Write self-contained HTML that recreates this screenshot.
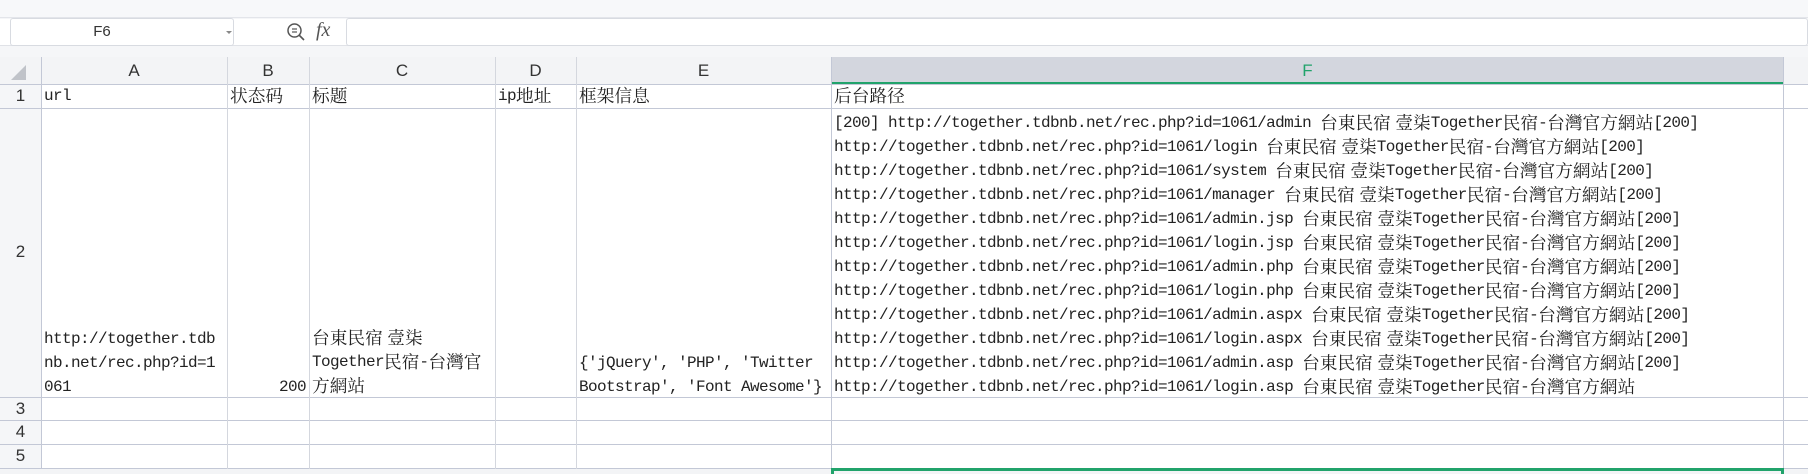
<!DOCTYPE html>
<html><head><meta charset="utf-8"><style>
*{margin:0;padding:0;box-sizing:border-box}
body{width:1808px;height:474px;overflow:hidden;background:#f5f6f8;position:relative;font-family:"Liberation Mono","Noto Serif CJK SC",monospace;color:#222}
.a{position:absolute}
.c{font-family:"Noto Serif CJK SC","Noto Sans CJK SC",serif;font-size:17.7px;display:inline-block;height:24px;line-height:24px;vertical-align:top;letter-spacing:0}
.t{position:absolute;font-size:16px;letter-spacing:-0.6px;white-space:nowrap}
.t div{height:24px;line-height:24px}
.h{position:absolute;top:57px;height:27px;line-height:27px;text-align:center;font-family:"Liberation Sans",sans-serif;font-size:17px;color:#333}
.r{position:absolute;left:0;width:41px;text-align:center;font-family:"Liberation Sans",sans-serif;font-size:17px;color:#333}
.vl{position:absolute;top:57px;width:1px;height:417px;background:#d4d7de}
.hl{position:absolute;left:0;width:1808px;height:1px;background:#c3c8d6}
</style></head><body>
<div class="a" style="left:0;top:0;width:1808px;height:18px;background:#f7f8fa;border-bottom:1px solid #e3e5ea"></div>
<div class="a" style="left:0;top:19px;width:1808px;height:27px;background:#fff;border-bottom:1px solid #e0e2e7"></div>
<div class="a" style="left:10px;top:18px;width:224px;height:28px;background:#fff;border:1px solid #d8dbe1;border-radius:3px;font-family:'Liberation Sans',sans-serif;font-size:15px;line-height:26px;text-align:center;color:#333;padding-right:40px">F6</div>
<div class="a" style="left:226px;top:31px;width:0;height:0;border-left:3px solid transparent;border-right:3px solid transparent;border-top:3px solid #888"></div>
<svg class="a" style="left:286px;top:22px" width="20" height="20" viewBox="0 0 20 20"><circle cx="8.5" cy="8.5" r="6.5" fill="none" stroke="#555" stroke-width="1.5"/><line x1="13" y1="13" x2="18" y2="18" stroke="#555" stroke-width="1.6"/><line x1="6" y1="7" x2="11" y2="7" stroke="#555" stroke-width="1.2"/><line x1="6" y1="10" x2="11" y2="10" stroke="#555" stroke-width="1.2"/></svg>
<div class="a" style="left:316px;top:19px;font-family:'Liberation Serif',serif;font-style:italic;font-size:20px;color:#555">fx</div>
<div class="a" style="left:346px;top:18px;width:1462px;height:28px;background:#fff;border:1px solid #d8dbe1;border-radius:3px"></div>
<div class="a" style="left:41px;top:84px;width:1767px;height:390px;background:#fff"></div>
<div class="a" style="left:0;top:57px;width:1808px;height:27px;background:#f3f4f6"></div>
<div class="a" style="left:831px;top:57px;width:953px;height:27px;background:#d3d6de"></div>
<div class="a" style="left:831px;top:82px;width:953px;height:2px;background:#21a36b"></div>
<div class="a" style="left:11px;top:65px;width:0;height:0;border-left:15px solid transparent;border-bottom:15px solid #c0c3c9"></div>
<div class="hl" style="top:84px"></div><div class="hl" style="top:108px"></div><div class="hl" style="top:397px"></div><div class="hl" style="top:420px"></div><div class="hl" style="top:444px"></div><div class="hl" style="top:468px"></div>
<div class="vl" style="left:41px;background:#c3c8d6"></div><div class="vl" style="left:227px"></div><div class="vl" style="left:309px"></div><div class="vl" style="left:495px"></div><div class="vl" style="left:576px"></div><div class="vl" style="left:831px;background:#c3c8d6"></div><div class="vl" style="left:1783px;background:#c3c8d6"></div>
<div class="a" style="left:0;top:469px;width:1808px;height:5px;background:#f3f4f6"></div>
<div class="a" style="left:831px;top:468px;width:953px;height:6px;border:3px solid #21a36b;border-bottom:none"></div>
<div class="h" style="left:41px;width:186px">A</div><div class="h" style="left:227px;width:82px">B</div><div class="h" style="left:309px;width:186px">C</div><div class="h" style="left:495px;width:81px">D</div><div class="h" style="left:576px;width:255px">E</div><div class="h" style="left:831px;width:953px;color:#21a36b">F</div>
<div class="r" style="top:84px;line-height:24px">1</div>
<div class="r" style="top:240px;line-height:24px">2</div>
<div class="r" style="top:397px;line-height:23px">3</div>
<div class="r" style="top:420px;line-height:24px">4</div>
<div class="r" style="top:444px;line-height:24px">5</div>
<div class="t" style="left:44px;top:84px"><div>url</div></div>
<div class="t" style="left:230px;top:84px"><div><span class="c">状态码</span></div></div>
<div class="t" style="left:312px;top:84px"><div><span class="c">标题</span></div></div>
<div class="t" style="left:498px;top:84px"><div>ip<span class="c">地址</span></div></div>
<div class="t" style="left:579px;top:84px"><div><span class="c">框架信息</span></div></div>
<div class="t" style="left:834px;top:84px"><div><span class="c">后台路径</span></div></div>
<div class="t" style="left:44px;top:327px"><div>http://together.tdb</div><div>nb.net/rec.php?id=1</div><div>061</div></div>
<div class="t" style="left:227px;top:375px;width:79px;text-align:right"><div>200</div></div>
<div class="t" style="left:312px;top:326px"><div><span class="c">台東民宿 壹柒</span></div><div>Together<span class="c">民宿</span>-<span class="c">台灣官</span></div><div><span class="c">方網站</span></div></div>
<div class="t" style="left:579px;top:351px"><div>{'jQuery', 'PHP', 'Twitter</div><div>Bootstrap', 'Font Awesome'}</div></div>
<div class="t" style="left:834px;top:111px">
<div>[200] http://together.tdbnb.net/rec.php?id=1061/admin <span class="c">台東民宿 壹柒</span>Together<span class="c">民宿</span>-<span class="c">台灣官方網站</span>[200]</div>
<div>http://together.tdbnb.net/rec.php?id=1061/login <span class="c">台東民宿 壹柒</span>Together<span class="c">民宿</span>-<span class="c">台灣官方網站</span>[200]</div>
<div>http://together.tdbnb.net/rec.php?id=1061/system <span class="c">台東民宿 壹柒</span>Together<span class="c">民宿</span>-<span class="c">台灣官方網站</span>[200]</div>
<div>http://together.tdbnb.net/rec.php?id=1061/manager <span class="c">台東民宿 壹柒</span>Together<span class="c">民宿</span>-<span class="c">台灣官方網站</span>[200]</div>
<div>http://together.tdbnb.net/rec.php?id=1061/admin.jsp <span class="c">台東民宿 壹柒</span>Together<span class="c">民宿</span>-<span class="c">台灣官方網站</span>[200]</div>
<div>http://together.tdbnb.net/rec.php?id=1061/login.jsp <span class="c">台東民宿 壹柒</span>Together<span class="c">民宿</span>-<span class="c">台灣官方網站</span>[200]</div>
<div>http://together.tdbnb.net/rec.php?id=1061/admin.php <span class="c">台東民宿 壹柒</span>Together<span class="c">民宿</span>-<span class="c">台灣官方網站</span>[200]</div>
<div>http://together.tdbnb.net/rec.php?id=1061/login.php <span class="c">台東民宿 壹柒</span>Together<span class="c">民宿</span>-<span class="c">台灣官方網站</span>[200]</div>
<div>http://together.tdbnb.net/rec.php?id=1061/admin.aspx <span class="c">台東民宿 壹柒</span>Together<span class="c">民宿</span>-<span class="c">台灣官方網站</span>[200]</div>
<div>http://together.tdbnb.net/rec.php?id=1061/login.aspx <span class="c">台東民宿 壹柒</span>Together<span class="c">民宿</span>-<span class="c">台灣官方網站</span>[200]</div>
<div>http://together.tdbnb.net/rec.php?id=1061/admin.asp <span class="c">台東民宿 壹柒</span>Together<span class="c">民宿</span>-<span class="c">台灣官方網站</span>[200]</div>
<div>http://together.tdbnb.net/rec.php?id=1061/login.asp <span class="c">台東民宿 壹柒</span>Together<span class="c">民宿</span>-<span class="c">台灣官方網站</span></div>
</div>
</body></html>
